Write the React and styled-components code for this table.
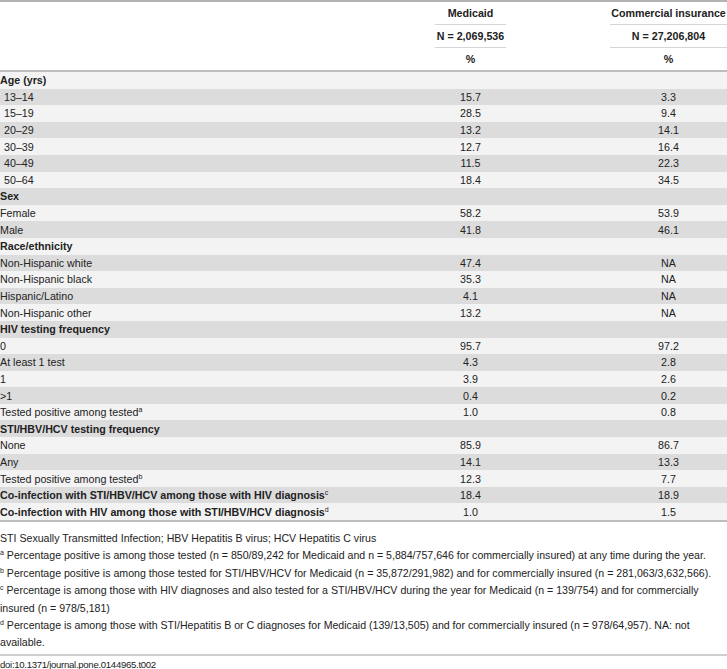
import styled, { createGlobalStyle } from 'styled-components';

const GlobalStyle = createGlobalStyle`
  html, body {
    margin: 0;
    padding: 0;
    background: #fff;
  }
  body {
    font-family: "Liberation Sans", Arial, Helvetica, sans-serif;
    color: #222;
    font-size: 10.7px;
  }
`;

const Figure = styled.div`
  width: 727px;
`;

const Table = styled.table`
  width: 727px;
  border-collapse: collapse;
  table-layout: fixed;
  border-top: 2px solid #b3b3b3;
  border-bottom: 2px solid #bdbdbd;
`;

const HeadCell = styled.th`
  height: ${({ $h }) => $h || 22}px;
  padding: 0;
  font-weight: ${({ $bold }) => ($bold ? 700 : 400)};
  text-align: center;
  vertical-align: middle;
  white-space: nowrap;
  line-height: 12px;
  border-bottom: ${({ $line }) => ($line ? '1px solid #d6d6d6' : 'none')};
`;

const HeadRow = styled.tr`
  &:last-child th {
    border-bottom: 2px solid #bdbdbd;
  }
`;

const Row = styled.tr`
  background: ${({ $dark }) => ($dark ? '#dcdcdd' : '#f3f3f3')};
`;

const Label = styled.td`
  height: 16.6px;
  padding: 0 0 0 ${({ $indent }) => ($indent ? 4 : 0)}px;
  font-weight: ${({ $bold }) => ($bold ? 700 : 400)};
  white-space: nowrap;
  line-height: 14px;
`;

const Value = styled.td`
  padding: 0;
  text-align: center;
  line-height: 14px;
`;

const Sup = styled.sup`
  font-size: 7px;
  line-height: 0;
  vertical-align: 4px;
  font-weight: 400;
`;

const Notes = styled.div`
  padding-top: 8px;
  padding-bottom: 2px;
  line-height: 17.4px;
  font-size: 10.6px;
  border-bottom: 2px solid #cfcfcf;
`;

const Note = styled.p`
  margin: 0;
`;

const Doi = styled.div`
  padding-top: 3px;
  line-height: 12px;
  font-size: 9.6px;
  letter-spacing: -0.3px;
`;

const rows = [
  { label: 'Age (yrs)', bold: true },
  { label: '13–14', indent: true, m: '15.7', c: '3.3' },
  { label: '15–19', indent: true, m: '28.5', c: '9.4' },
  { label: '20–29', indent: true, m: '13.2', c: '14.1' },
  { label: '30–39', indent: true, m: '12.7', c: '16.4' },
  { label: '40–49', indent: true, m: '11.5', c: '22.3' },
  { label: '50–64', indent: true, m: '18.4', c: '34.5' },
  { label: 'Sex', bold: true },
  { label: 'Female', m: '58.2', c: '53.9' },
  { label: 'Male', m: '41.8', c: '46.1' },
  { label: 'Race/ethnicity', bold: true },
  { label: 'Non-Hispanic white', m: '47.4', c: 'NA' },
  { label: 'Non-Hispanic black', m: '35.3', c: 'NA' },
  { label: 'Hispanic/Latino', m: '4.1', c: 'NA' },
  { label: 'Non-Hispanic other', m: '13.2', c: 'NA' },
  { label: 'HIV testing frequency', bold: true },
  { label: '0', m: '95.7', c: '97.2' },
  { label: 'At least 1 test', m: '4.3', c: '2.8' },
  { label: '1', m: '3.9', c: '2.6' },
  { label: '>1', m: '0.4', c: '0.2' },
  { label: 'Tested positive among tested', sup: 'a', m: '1.0', c: '0.8' },
  { label: 'STI/HBV/HCV testing frequency', bold: true },
  { label: 'None', m: '85.9', c: '86.7' },
  { label: 'Any', m: '14.1', c: '13.3' },
  { label: 'Tested positive among tested', sup: 'b', m: '12.3', c: '7.7' },
  { label: 'Co-infection with STI/HBV/HCV among those with HIV diagnosis', sup: 'c', bold: true, m: '18.4', c: '18.9' },
  { label: 'Co-infection with HIV among those with STI/HBV/HCV diagnosis', sup: 'd', bold: true, m: '1.0', c: '1.5' },
];

export default function App() {
  return (
    <Figure>
      <GlobalStyle />
      <Table>
        <colgroup>
          <col style={{ width: 435 }} />
          <col style={{ width: 71 }} />
          <col style={{ width: 104 }} />
          <col style={{ width: 117 }} />
        </colgroup>
        <thead>
          <HeadRow>
            <HeadCell $h={22} />
            <HeadCell $bold $line>Medicaid</HeadCell>
            <HeadCell />
            <HeadCell $bold $line>Commercial insurance</HeadCell>
          </HeadRow>
          <HeadRow>
            <HeadCell $h={22} />
            <HeadCell $bold $line>N = 2,069,536</HeadCell>
            <HeadCell />
            <HeadCell $bold $line>N = 27,206,804</HeadCell>
          </HeadRow>
          <HeadRow>
            <HeadCell $h={16} />
            <HeadCell $bold>%</HeadCell>
            <HeadCell />
            <HeadCell $bold>%</HeadCell>
          </HeadRow>
        </thead>
        <tbody>
          {rows.map((r, i) => (
            <Row key={i} $dark={i % 2 === 1}>
              <Label $bold={r.bold} $indent={r.indent}>
                {r.label}
                {r.sup && <Sup>{r.sup}</Sup>}
              </Label>
              <Value>{r.m}</Value>
              <Value />
              <Value>{r.c}</Value>
            </Row>
          ))}
        </tbody>
      </Table>
      <Notes>
        <Note>STI Sexually Transmitted Infection; HBV Hepatitis B virus; HCV Hepatitis C virus</Note>
        <Note>
          <Sup>a</Sup> Percentage positive is among those tested (n = 850/89,242 for Medicaid and n = 5,884/757,646 for commercially insured) at any time during the year.
        </Note>
        <Note>
          <Sup>b</Sup> Percentage positive is among those tested for STI/HBV/HCV for Medicaid (n = 35,872/291,982) and for commercially insured (n = 281,063/3,632,566).
        </Note>
        <Note>
          <Sup>c</Sup> Percentage is among those with HIV diagnoses and also tested for a STI/HBV/HCV during the year for Medicaid (n = 139/754) and for commercially insured (n = 978/5,181)
        </Note>
        <Note>
          <Sup>d</Sup> Percentage is among those with STI/Hepatitis B or C diagnoses for Medicaid (139/13,505) and for commercially insured (n = 978/64,957). NA: not available.
        </Note>
      </Notes>
      <Doi>doi:10.1371/journal.pone.0144965.t002</Doi>
    </Figure>
  );
}
